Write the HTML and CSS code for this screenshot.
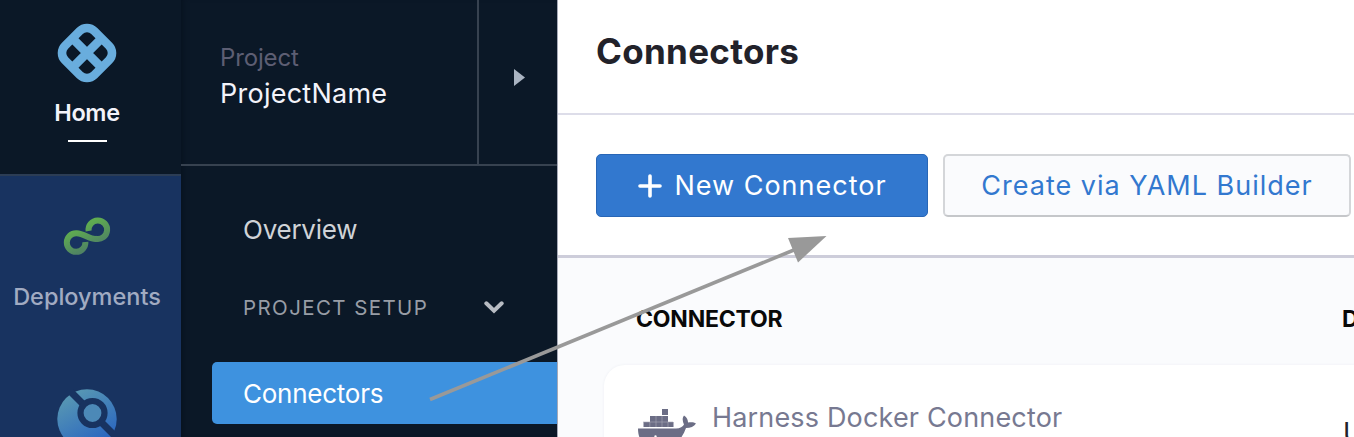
FILE: index.html
```html
<!DOCTYPE html>
<html lang="en">
<head>
<meta charset="utf-8">
<title>Connectors</title>
<link rel="stylesheet" href="styles.css">
</head>
<body>
<div class="app">
  <nav class="rail">
    <a class="rail-item rail-item-active">
      <svg class="logo" viewBox="0 0 60 60" width="60" height="60">
        <g transform="rotate(45 30 30)" fill="none" stroke="#69addd" stroke-width="8.6">
          <rect x="9.3" y="9.3" width="41.4" height="41.4" rx="10.3"/>
          <path d="M30 9v42M9 30h42"/>
        </g>
      </svg>
      <span class="rail-label home-label">Home</span>
      <span class="underline"></span>
    </a>
    <a class="rail-item">
      <svg class="loop" viewBox="0 0 48 38" width="48" height="38">
        <defs><linearGradient id="green" x1="0" y1="0" x2="0.6" y2="1"><stop offset=".3" stop-color="#5fac50"/><stop offset="1" stop-color="#4d7d66"/></linearGradient></defs>
        <path fill="none" stroke="url(#green)" stroke-width="6" d="M25.6 14A9.3 9.3 0 1 1 33 21.9C28 22.8 21 16.6 13.6 16.2A9.3 9.3 0 1 0 22.4 25"/>
      </svg>
      <span class="rail-label">Deployments</span>
    </a>
    <a class="rail-item">
      <svg class="lens" viewBox="0 0 60 60" width="60" height="60">
        <defs><linearGradient id="blue" x1="0.2" y1="0" x2="0.7" y2="0.9"><stop offset="0" stop-color="#5b9bb2"/><stop offset="1" stop-color="#2b67c0"/></linearGradient></defs>
        <circle cx="30" cy="30" r="29.7" fill="url(#blue)"/>
        <path d="M11 0L58 47" stroke="#183360" stroke-width="7"/>
        <circle cx="35.500" cy="24" r="12" fill="#4c89b7" stroke="#183360" stroke-width="6.200"/>
      </svg>
    </a>
  </nav>
  <aside class="sidebar">
    <div class="project">
      <div class="project-info">
        <span class="project-kind">Project</span>
        <span class="project-name">ProjectName</span>
      </div>
      <div class="project-toggle"><svg viewBox="0 0 11 17" width="11" height="17"><path d="M0 0L11 8.5L0 17z" fill="#aab4c2"/></svg></div>
    </div>
    <a class="nav-item">Overview</a>
    <div class="nav-group"><span class="nav-group-name">PROJECT SETUP</span><svg viewBox="0 0 20 13" width="20" height="13"><path d="M2.3 2.3L10 9.7L17.7 2.3" fill="none" stroke="#b8bcc3" stroke-width="4" stroke-linecap="round"/></svg></div>
    <a class="nav-item nav-item-active">Connectors</a>
  </aside>
  <main class="content">
    <header class="header"><h1 class="title">Connectors</h1></header>
    <div class="toolbar">
      <button class="button primary"><svg viewBox="0 0 24 24" width="24" height="24"><path d="M12 2v20M2 12h20" stroke="#fff" stroke-width="3.6" stroke-linecap="round"/></svg><span>New Connector</span></button>
      <button class="button secondary"><span>Create via YAML Builder</span></button>
    </div>
    <section class="list">
      <div class="columns"><span class="column-name">CONNECTOR</span><span class="column-details">DETAILS</span></div>
      <div class="card">
        <svg class="docker" viewBox="0 0 60 42" width="60" height="42" fill="#6b6d85">
          <path d="M25 1h6v6h-6zM13 8h18v6H13zM6.500 14h30v5h-30z"/>
          <path d="M1 20.500H39C43 20.500 46 18.500 47 16.500C45.500 13.500 45 10 47 7.500C50 9.500 51 12 51 14.500C54 14 57 14 59 15.500C57 18.500 53.500 20 49 20C45 31 37 41 22 41C8 41 1 33 1 20.500z"/>
          <path d="M12.800 14v5M19 8v11M25 8v11M31 14v5M6 14h30" stroke="#a7a8b7" stroke-width=".6"/>
          <circle cx="18.500" cy="28.500" r="1.200" fill="#fff"/>
        </svg>
        <span class="connector-name">Harness Docker Connector</span>
        <span class="details">URL</span>
      </div>
    </section>
  </main>
  <svg class="arrow" viewBox="0 0 1354 437" width="1354" height="437"><path d="M430 399.500L800 247.500" stroke="#999" stroke-width="3.600"/><path d="M788 238L826.500 236L798 262.500z" fill="#999"/></svg>
</div>
</body>
</html>
```
FILE: styles.css
```css
* { box-sizing: border-box; }
body { margin: 0; overflow: hidden; }
.app { position: relative; display: flex; width: 1354px; height: 437px; overflow: hidden; font-family: Inter, "Liberation Sans", sans-serif; white-space: nowrap; }
svg { display: block; flex: none; }
.arrow { position: absolute; inset: 0; pointer-events: none; }

.rail { width: 181px; flex: none; background: #183360; }
.rail-item { display: flex; flex-direction: column; align-items: center; width: 174px; }
.rail-item-active { width: 181px; height: 176px; padding: 22.500px 7px 0 0; background: #0b1827; border-bottom: 2px solid #2c3d55; }
.rail-label { margin-top: 27px; font-size: 23.500px; line-height: 30px; font-weight: 500; color: #a1abc2; }
.home-label { margin-top: 15.500px; font-weight: 600; letter-spacing: -.4px; color: #f3f3fa; }
.underline { width: 39px; height: 2px; margin-top: 12px; background: #fff; }
.loop { margin-top: 41px; }
.lens { margin-top: 77px; }

.sidebar { width: 377px; flex: none; background: #0b1827; border-right: 1px solid #a5a9b7; box-shadow: inset 6px 0 6px -5px #06101d; }
.project { display: flex; height: 166px; border-bottom: 2px solid #374250; }
.project-info { display: flex; flex-direction: column; width: 298px; padding: 43px 0 0 39px; border-right: 2px solid #374250; }
.project-kind { font-size: 24px; line-height: 30px; letter-spacing: -.15px; color: #5d5e73; }
.project-name { margin-top: 4px; font-size: 27px; line-height: 34px; letter-spacing: .25px; color: #f3f3fa; }
.project-toggle { padding: 69px 0 0 35px; }
.nav-item { display: flex; align-items: center; height: 62px; margin: 32px 0 0 31px; padding-left: 31px; font-size: 26px; letter-spacing: -.25px; color: #d0d3d7; }
.nav-group { display: flex; align-items: center; height: 30px; margin-top: 32px; padding-left: 62px; }
.nav-group-name { width: 241px; font-size: 20.500px; letter-spacing: 1.400px; color: #989da6; }
.nav-item-active { margin-top: 40px; background: #3e92df; border-radius: 5px 0 0 5px; color: #fff; }

.content { flex: 1; min-width: 0; background: #fff; }
.header { height: 115px; padding: 29px 0 0 38px; border-bottom: 2px solid #dddde9; }
.title { margin: 0; font-size: 35px; line-height: 44px; font-weight: 700; letter-spacing: .3px; color: #22222a; }
.toolbar { display: flex; gap: 15px; height: 143px; padding: 39px 0 0 38px; border-bottom: 3px solid #cdcdda; }
.button { display: flex; align-items: center; justify-content: center; flex: none; height: 63px; padding: 0; border-radius: 5px; font: 400 27px Inter, sans-serif; letter-spacing: 1px; }
.primary { width: 332px; padding-left: 1px; gap: 12px; background: #3278cf; border: 1px solid #2866b6; color: #fff; }
.secondary { width: 408px; background: #fafbfd; border: 2px solid #d4d6d9; border-bottom-color: #c5c7ca; color: #3278cf; }
.list { height: 179px; background: #fafbfd; }
.columns { display: flex; height: 107px; padding: 46px 0 0 78px; font-size: 23px; line-height: 30px; font-weight: 700; letter-spacing: -.2px; color: #090909; }
.column-name { width: 706px; flex: none; }
.card { display: flex; width: 900px; height: 120px; margin-left: 46px; padding-left: 33px; background: #fff; border-radius: 21px; box-shadow: 0 0 3px #edeff4; }
.docker { margin-top: 43px; }
.connector-name { width: 631px; margin: 36px 0 0 15px; font-size: 27px; line-height: 34px; letter-spacing: .17px; color: #777991; }
.details { margin-top: 51px; font-size: 27px; line-height: 34px; color: #22222a; }
```
